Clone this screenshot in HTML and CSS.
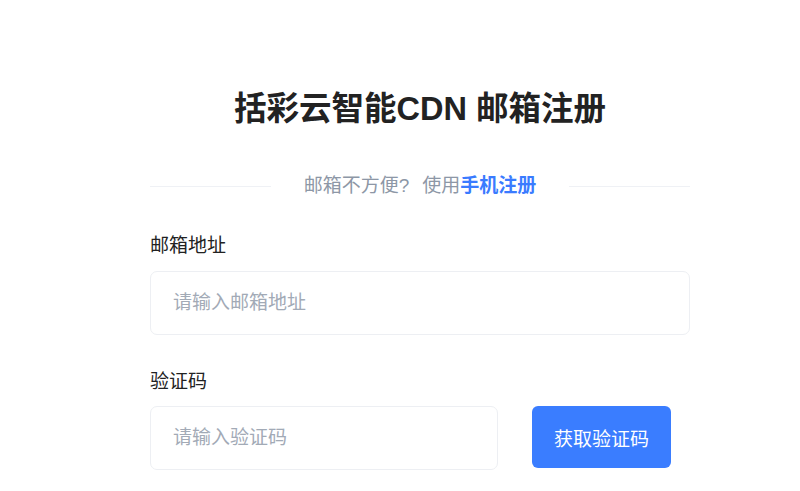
FILE: index.html
```html
<!DOCTYPE html>
<html lang="zh-CN">
<head>
<meta charset="utf-8">
<title>括彩云智能CDN 邮箱注册</title>
<link rel="stylesheet" href="styles.css">
</head>
<body>
<main class="page">
  <h1 class="title">括彩云智能CDN 邮箱注册</h1>
  <div class="divider">
    <span class="line"></span>
    <p class="switch">邮箱不方便?<span class="use">使用</span><a class="link" href="#">手机注册</a></p>
    <span class="line"></span>
  </div>
  <form class="form">
    <label class="label" for="email">邮箱地址</label>
    <input class="input" id="email" type="text" placeholder="请输入邮箱地址">
    <label class="label label-code" for="code">验证码</label>
    <div class="code-row">
      <input class="input input-code" id="code" type="text" placeholder="请输入验证码">
      <button class="btn" type="button">获取验证码</button>
    </div>
  </form>
</main>
</body>
</html>
```

FILE: styles.css
```css
* { box-sizing: border-box; }
html, body { margin: 0; padding: 0; background: #fff; }
body {
  font-family: "Liberation Sans", "Noto Sans CJK SC", sans-serif;
  color: #222;
  overflow: hidden;
}
.page {
  width: 540px;
  margin-left: 150px;
  padding-top: 87px;
}
.title {
  margin: 0;
  font-size: 32.5px;
  line-height: 44px;
  font-weight: 700;
  text-align: center;
  color: #222;
}
.divider {
  display: flex;
  align-items: center;
  margin-top: 43px;
  height: 24px;
}
.line {
  flex: 1;
  height: 1px;
  background: #eff1f5;
}
.switch {
  margin: 0 33px;
  font-size: 19px;
  line-height: 24px;
  color: #8d97a6;
  white-space: nowrap;
}
.use { margin-left: 13px; }
.link {
  color: #3a7bff;
  font-weight: 700;
  text-decoration: none;
}
.form {
  display: flex;
  flex-direction: column;
  margin-top: 36px;
}
.label {
  font-size: 19px;
  line-height: 24px;
  color: #222;
}
.label-code { margin-top: 35px; }
.input {
  margin-top: 13px;
  width: 540px;
  height: 64px;
  border: 1px solid #edeff3;
  border-radius: 7px;
  padding: 0 22px;
  font-family: inherit;
  font-size: 19px;
  color: #222;
  outline: none;
  background: #fff;
}
.input::placeholder { color: #a2aab6; }
.code-row {
  display: flex;
  align-items: flex-start;
  margin-top: 12px;
}
.input-code {
  margin-top: 0;
  width: 348px;
}
.btn {
  margin-left: 34px;
  width: 139px;
  height: 62px;
  border: none;
  border-radius: 6px;
  background: #3a7dff;
  color: #fff;
  font-family: inherit;
  font-size: 19px;
  cursor: pointer;
}
```
